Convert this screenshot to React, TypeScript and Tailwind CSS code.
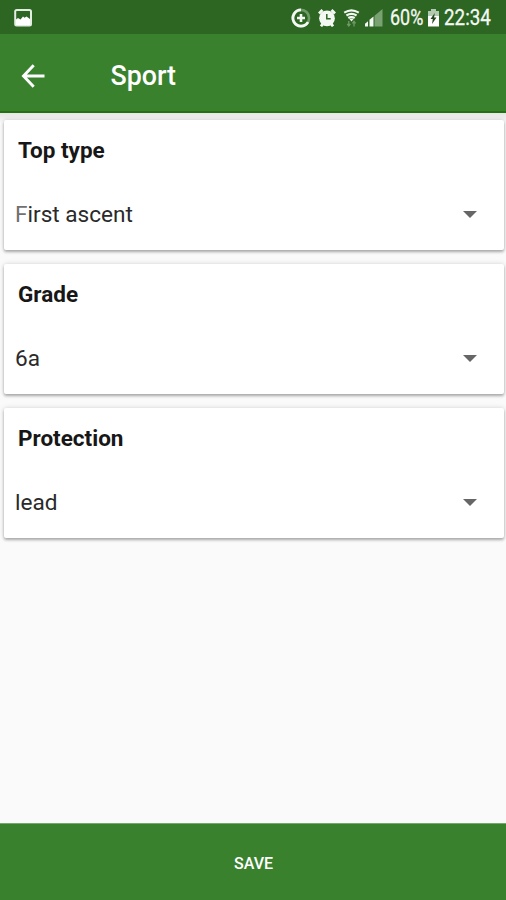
import React from "react";

const fields = [
  { label: "Top type", value: "First ascent", faded: true },
  { label: "Grade", value: "6a" },
  { label: "Protection", value: "lead" },
];

function StatusBar() {
  return (
    <div className="flex h-[34px] shrink-0 items-center bg-[#2d6522] pt-0.5 pl-[14px] pr-[15px] text-[#f4f8f3]">
      <svg className="h-[18px] w-[18px]" viewBox="0 0 18 18">
        <rect x="1.200" y="1" width="15.800" height="15.500" rx="1.500" fill="none" stroke="#e3ede1" strokeWidth="2" />
        <path d="M2 10.500 4 9l2.500 1.500L9 7.500l1.500 1.200 2-1.200L16 10v6H2z" fill="#ffffff" />
      </svg>

      <div className="ml-auto flex items-center">
        <svg className="h-5 w-5" viewBox="0 0 20 20" fill="none">
          <circle cx="10" cy="10" r="8.100" stroke="#6f9a67" strokeWidth="2.600" />
          <path d="M10 1.900a8.100 8.100 0 1 0 7 12.200" stroke="currentColor" strokeWidth="2.800" />
          <path d="M10 6v8M6 10h8" stroke="currentColor" strokeWidth="2.600" />
        </svg>

        <svg className="ml-[7px] h-[18px] w-[18px]" viewBox="0 0 18 18">
          <path d="M1 4.500 4.500 1M17 4.500 13.500 1M3 17.300l2-2.800M15 17.300l-2-2.800" stroke="currentColor" strokeWidth="2.800" />
          <circle cx="9" cy="9.300" r="7.900" fill="currentColor" />
          <path d="M8.800 5v4.700h3.900" fill="none" stroke="#2d6522" strokeWidth="1.500" />
        </svg>

        <svg className="ml-[7px] h-[18px] w-[17px]" viewBox="0 0 17 18" fill="none">
          <path d="M1.200 3.700Q8.500-1 15.800 3.700" stroke="currentColor" strokeWidth="2.100" />
          <path d="M3.400 6.500Q8.500 3.200 13.600 6.500" stroke="currentColor" strokeWidth="2.100" />
          <path d="M5.300 9Q8.500 7 11.700 9" stroke="currentColor" strokeWidth="2.100" />
          <path d="M6 9.500h5L8.500 12.500z" fill="currentColor" />
          <path d="M5.800 12v5.200M4.200 14.900l1.600 2 1.600-2" stroke="#6f9a67" strokeWidth="1.300" />
          <path d="M11 17.500v-5.200M9.400 14.300l1.600-2 1.600 2" stroke="#6f9a67" strokeWidth="1.300" />
        </svg>

        <svg className="ml-[5px] h-[18px] w-[18px]" viewBox="0 0 18 18">
          <path d="M0 17.500v-2.700L3 12.300v5.200z" fill="currentColor" />
          <path d="M4.500 17.500v-6.700L8.500 7.500v10z" fill="currentColor" />
          <path d="M9.500 17.500V6.700L17.500 0v17.500z" fill="#79a171" />
        </svg>

        <span className="ml-[7px] w-[34px] origin-left scale-x-[0.835] whitespace-nowrap text-[21.500px] leading-none [-webkit-text-stroke:0.300px_currentColor]">60%</span>

        <svg className="ml-[4px] h-[18px] w-[11px]" viewBox="0 0 11 18">
          <path d="M3 0h5v2H3z" fill="#b4cab0" />
          <path d="M0 2h11v6H0z" fill="#b4cab0" />
          <path d="M0 7h11v10.500H0z" fill="#ffffff" />
          <path d="M6.800 4 2.500 10h2.300L4 15l4.500-6.500H6.100z" fill="#26441f" />
        </svg>

        <span className="ml-[5px] w-[47px] origin-left scale-x-[0.875] whitespace-nowrap text-[21.500px] leading-none [-webkit-text-stroke:0.300px_currentColor]">22:34</span>
      </div>
    </div>
  );
}

function AppBar() {
  return (
    <div className="flex h-[79px] shrink-0 items-center border-b-2 border-[#23720f] bg-[#39812d] pt-1.5 pl-[21px] text-white">
      <svg className="h-6 w-6" viewBox="0 0 24 24" fill="none">
        <path d="M23.500 12H2.500M12.700 1.300 2.500 12l10.200 10.700" stroke="currentColor" strokeWidth="2.900" />
      </svg>
      <h1 className="ml-[65.500px] pt-0.5 text-[26.800px] font-medium leading-none">Sport</h1>
    </div>
  );
}

function Field({ label, value, faded }: { label: string; value: string; faded?: boolean }) {
  return (
    <div className="h-[130px] rounded-[2px] bg-white shadow-[0_2px_3px_rgba(0,0,0,0.28),0_0_5px_rgba(0,0,0,0.15)]">
      <h2 className="pt-[14px] pl-[14px] text-[22.500px] font-bold leading-8 text-[#171717]">{label}</h2>
      <div className="mt-[33px] flex items-center justify-between pl-[11px] pr-[27px]">
        <span className={`text-[22.600px] leading-8 text-[#2a2a2a] ${faded ? "first-letter:text-[#707070]" : ""}`}>{value}</span>
        <svg className="-mt-px h-[7px] w-[14px]" viewBox="0 0 14 7">
          <path d="M0 0h14L7 7z" fill="#666666" />
        </svg>
      </div>
    </div>
  );
}

export default function App() {
  return (
    <div className="flex h-[900px] w-full flex-col overflow-hidden bg-[#fafafa] font-['Roboto',sans-serif]">
      <StatusBar />
      <AppBar />
      <div className="flex flex-1 flex-col gap-[14px] bg-linear-to-b from-[#e6e6e6] to-[#fafafa] to-[10px] pt-[7px] pr-0.5 pl-1">
        {fields.map((f) => (
          <Field key={f.label} label={f.label} value={f.value} faded={f.faded} />
        ))}
      </div>
      <button className="h-[77px] shrink-0 border-t border-[#76a76e] bg-[#39812d] pt-[3px] pl-px text-[16px] font-medium text-white">
        SAVE
      </button>
    </div>
  );
}
